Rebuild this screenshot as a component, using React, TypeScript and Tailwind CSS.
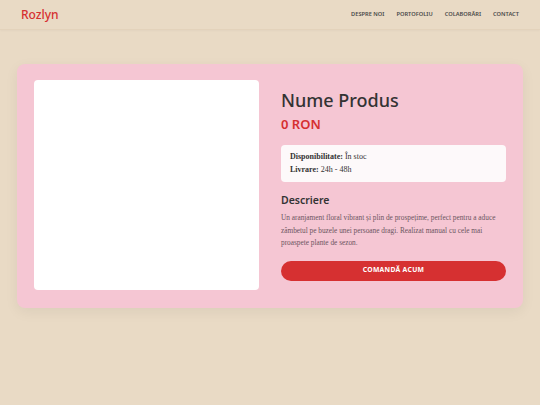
export default function App() {
  const sans = { fontFamily: '"Noto Sans", "Open Sans", sans-serif' };
  const serif = { fontFamily: '"Liberation Serif", "DejaVu Serif", serif' };

  return (
    <div className="min-h-[405px] w-full bg-[#e9dac5]" style={sans}>
      <header className="flex h-[30px] items-center justify-between border-b border-[#e3d2bb] px-[21px] shadow-[0_1px_2px_rgba(0,0,0,0.03)]">
        <div className="text-[12px] font-medium text-[#d63031]">Rozlyn</div>
        <nav className="flex items-center gap-[12px] text-[5.7px] font-semibold uppercase text-[#4a4a4a]">
          <span>Despre noi</span>
          <span>Portofoliu</span>
          <span>Colaborări</span>
          <span>Contact</span>
        </nav>
      </header>

      <main className="mx-[17px] mt-[34px] flex gap-[22px] rounded-[8px] bg-[#f5c6d3] px-[17px] pb-[18px] pt-[16px] shadow-[0_4px_14px_rgba(0,0,0,0.06)]">
        <div className="h-[210px] w-[225px] rounded-[4px] bg-white" />

        <div className="flex flex-1 flex-col pt-[9px]">
          <h1 className="text-[18px] font-medium leading-[22px] text-[#333]">Nume Produs</h1>
          <div className="mt-[4px] text-[13px] font-semibold leading-[18px] text-[#d63031]">0 RON</div>

          <div className="mt-[12px] rounded-[4px] bg-[#fdf9fa] px-[9px] py-[6px] text-[8px] leading-[12.5px] text-[#333]" style={serif}>
            <div><b>Disponibilitate:</b> În stoc</div>
            <div><b>Livrare:</b> 24h - 48h</div>
          </div>

          <h2 className="mt-[11px] text-[10.5px] font-semibold leading-[14px] text-[#333]">Descriere</h2>
          <p className="mt-[5px] text-[7.3px] leading-[12.5px] text-[#6b5560]" style={serif}>
            Un aranjament floral vibrant și plin de prospețime, perfect pentru a aduce zâmbetul pe buzele unei persoane dragi. Realizat manual cu cele mai proaspete plante de sezon.
          </p>

          <button className="mt-[11px] h-[20px] w-full rounded-full bg-[#d63031] text-[6.8px] font-bold uppercase tracking-[0.3px] text-white">
            Comandă acum
          </button>
        </div>
      </main>
    </div>
  );
}
